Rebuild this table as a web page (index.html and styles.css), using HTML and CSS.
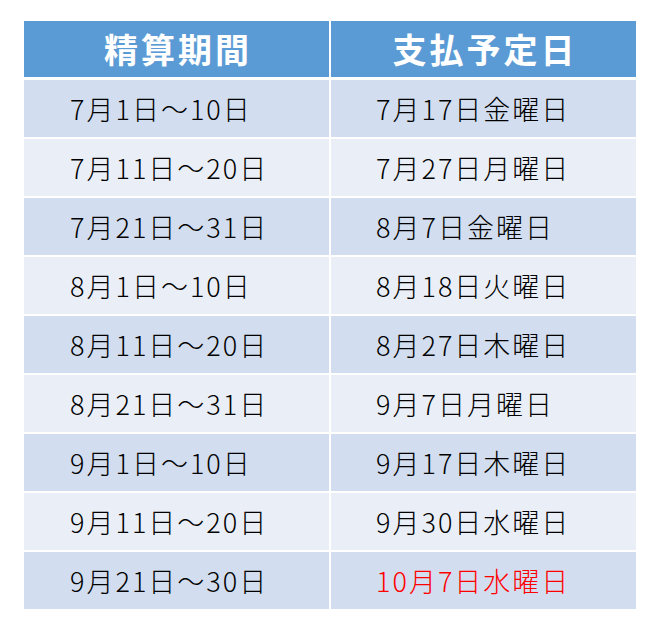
FILE: index.html
```html
<!DOCTYPE html>
<html lang="ja">
<head>
<meta charset="utf-8">
<link rel="stylesheet" href="styles.css">
</head>
<body>
<div class="table">
  <div class="head">精算期間</div>
  <div class="head">支払予定日</div>

  <div class="cell odd">7月1日～10日</div>
  <div class="cell odd">7月17日金曜日</div>

  <div class="cell even">7月11日～20日</div>
  <div class="cell even">7月27日月曜日</div>

  <div class="cell odd">7月21日～31日</div>
  <div class="cell odd">8月7日金曜日</div>

  <div class="cell even">8月1日～10日</div>
  <div class="cell even">8月18日火曜日</div>

  <div class="cell odd">8月11日～20日</div>
  <div class="cell odd">8月27日木曜日</div>

  <div class="cell even">8月21日～31日</div>
  <div class="cell even">9月7日月曜日</div>

  <div class="cell odd">9月1日～10日</div>
  <div class="cell odd">9月17日木曜日</div>

  <div class="cell even">9月11日～20日</div>
  <div class="cell even">9月30日水曜日</div>

  <div class="cell odd">9月21日～30日</div>
  <div class="cell odd red">10月7日水曜日</div>
</div>
</body>
</html>
```

FILE: styles.css
```css
html, body {
  margin: 0;
  padding: 0;
  background: #ffffff;
}

body {
  font-family: "Noto Sans CJK JP", "Noto Sans", sans-serif;
  padding: 21px 0 0 24px;
}

.table {
  display: grid;
  grid-template-columns: 305px 305px;
  grid-auto-rows: 57px;
  column-gap: 2px;
  row-gap: 2px;
  width: 612px;
}

.head {
  background: #5b9bd5;
  color: #ffffff;
  font-weight: bold;
  font-size: 34px;
  letter-spacing: 3px;
  display: flex;
  align-items: center;
  justify-content: center;
  margin-bottom: 1px;
  line-height: 1;
  padding-left: 3px;
}

.cell {
  display: flex;
  align-items: center;
  padding-left: 46px;
  font-size: 27px;
  font-weight: 300;
  letter-spacing: 2px;
  color: #000000;
  line-height: 1;
}

.cell:nth-child(even) {
  padding-left: 45px;
}

.odd {
  background: #d2deef;
}

.even {
  background: #eaeff7;
}

.red {
  color: #ff0000;
}
```
